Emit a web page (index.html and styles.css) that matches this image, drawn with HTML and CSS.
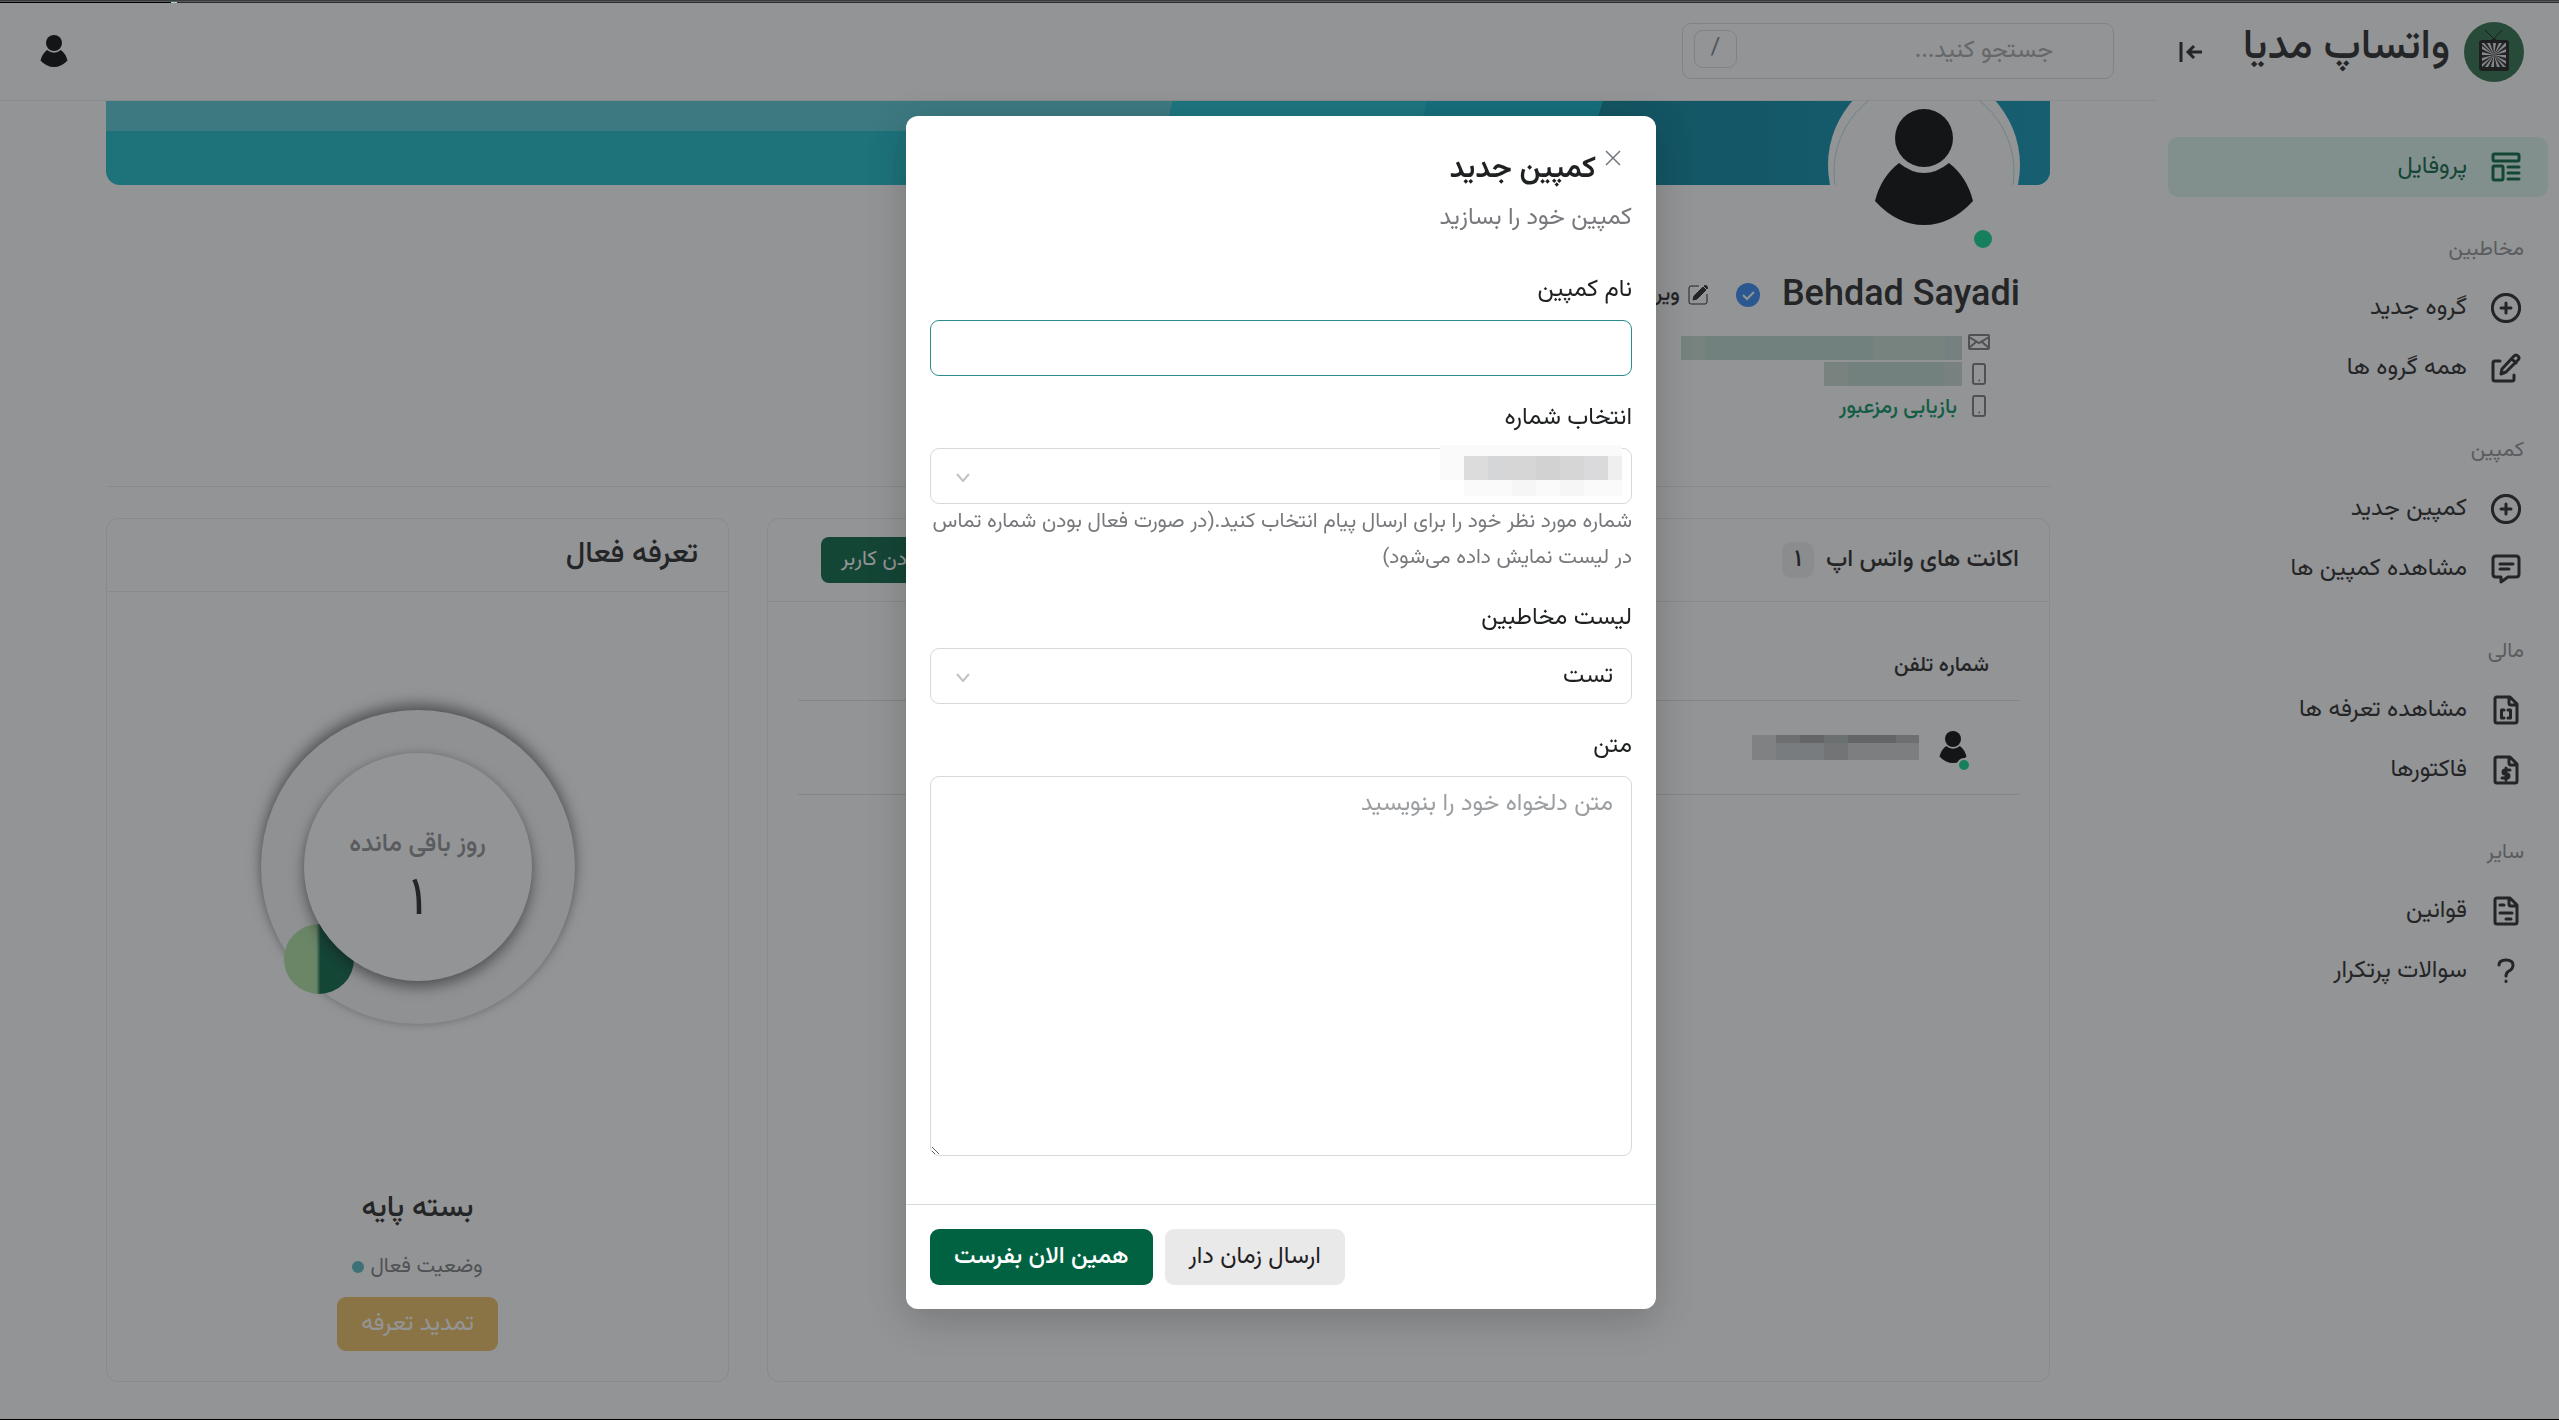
FILE: index.html
```html
<!DOCTYPE html>
<html lang="fa" dir="rtl">
<head>
    <meta charset="UTF-8">
    <meta name="viewport" content="width=device-width, initial-scale=1.0">
    <title>واتساپ مدیا</title>
    <link rel="stylesheet" href="styles.css">
</head>
<body>

<!-- shared icons -->
<svg class="defs" width="0" height="0" aria-hidden="true">
    <symbol id="person" viewBox="0 0 98 116">
        <circle cx="49" cy="29" r="29"/>
        <path d="M24 54 Q49 74 74 54 Q92 68 98 92 Q76 116 49 116 Q22 116 0 92 Q6 68 24 54Z"/>
    </symbol>
    <symbol id="plus" viewBox="0 0 30 30">
        <circle cx="15" cy="15" r="13.6"/>
        <path d="M15 10v10M10 15h10"/>
    </symbol>
    <symbol id="phone" viewBox="0 0 14 22">
        <rect x="1" y="1" width="12" height="20" rx="2"/>
        <path d="M6.500 17.500h1.500"/>
    </symbol>
</svg>

<div class="edge-top"><span class="edge-mark"></span></div>

<div class="app">
    <aside class="sidebar">
        <div class="brand">
            <svg class="brand-logo" viewBox="0 0 60 60">
                <circle cx="30" cy="30" r="30" fill="#286a47"/>
                <path d="M21 8l9 9l8-9" stroke="#111" stroke-width="1" fill="none"/>
                <path d="M26 19q4-5 8 0z" fill="#111"/>
                <rect x="15" y="18" width="30" height="31" rx="3" fill="#151515"/>
                <rect x="18" y="21" width="24" height="24" fill="#e4e4e4"/>
                <path d="M30 33L20 21h3zM30 33L26 21h3zM30 33L32 21h3zM30 33L38 21h3zM30 33L42 24v3zM30 33L42 30v3zM30 33L42 36v3zM30 33L42 42v3zM30 33L36 45h3zM30 33L30 45h3zM30 33L24 45h3zM30 33L18 45h3zM30 33L18 39v3zM30 33L18 33v3zM30 33L18 27v3zM30 33L18 22v2z" fill="#222"/>
            </svg>
            <span class="brand-name">واتساپ مدیا</span>
            <button class="icon-button collapse" aria-label="بستن منو">
                <svg width="24" height="24" viewBox="0 0 24 24"><path d="M2 2v20M23 12H10M15 6l-6 6l6 6"/></svg>
            </button>
        </div>

        <nav class="menu">
            <a class="menu-item active" href="#">
                <svg class="menu-icon" viewBox="0 0 30 30"><rect x="2" y="2" width="26" height="7" rx="1.500"/><rect x="2" y="14" width="10" height="14" rx="1.500"/><path d="M17 15h11M17 21h11M17 27h11"/></svg>
                <span>پروفایل</span>
            </a>

            <h2 class="menu-title">مخاطبین</h2>
            <a class="menu-item" href="#">
                <svg class="menu-icon"><use href="#plus"/></svg>
                <span>گروه جدید</span>
            </a>
            <a class="menu-item" href="#">
                <svg class="menu-icon" viewBox="0 0 30 30"><path d="M9 8H4Q2 8 2 10V26Q2 28 4 28H21Q23 28 23 26V22M10 21l1-5L23 3q2-2 4 0t0 4L15 19zM21 6l4 4"/></svg>
                <span>همه گروه ها</span>
            </a>

            <h2 class="menu-title">کمپین</h2>
            <a class="menu-item" href="#">
                <svg class="menu-icon"><use href="#plus"/></svg>
                <span>کمپین جدید</span>
            </a>
            <a class="menu-item" href="#">
                <svg class="menu-icon" viewBox="0 0 30 30"><path d="M5 2H25Q28 2 28 5V20Q28 23 25 23H17L10 28V23H5Q2 23 2 20V5Q2 2 5 2ZM9 10h13M9 15h9"/></svg>
                <span>مشاهده کمپین ها</span>
            </a>

            <h2 class="menu-title">مالی</h2>
            <a class="menu-item" href="#">
                <svg class="menu-icon" viewBox="0 0 30 30"><path d="M6 2H19L26 9V26Q26 28 24 28H6Q4 28 4 26V4Q4 2 6 2ZM18 2v6q0 2 2 2h6M13 15h-2.500v8h2.500M17 15h2.500v8h-2.500"/></svg>
                <span>مشاهده تعرفه ها</span>
            </a>
            <a class="menu-item" href="#">
                <svg class="menu-icon" viewBox="0 0 30 30"><path d="M6 2H19L26 9V26Q26 28 24 28H6Q4 28 4 26V4Q4 2 6 2ZM18 2v6q0 2 2 2h6M19 15h-5q-2 0-2 2t2 2h2q2 0 2 2t-2 2h-5M15 13v12"/></svg>
                <span>فاکتورها</span>
            </a>

            <h2 class="menu-title">سایر</h2>
            <a class="menu-item" href="#">
                <svg class="menu-icon" viewBox="0 0 30 30"><path d="M6 2H19L26 9V26Q26 28 24 28H6Q4 28 4 26V4Q4 2 6 2ZM18 2v6q0 2 2 2h6M9 9h4M9 17h12M15 23h5"/></svg>
                <span>قوانین</span>
            </a>
            <a class="menu-item" href="#">
                <svg class="menu-icon" viewBox="0 0 30 30"><path d="M8 9q0-5 7-5t7 5q0 4-4 6q-3 1.500-3 5M15 25v.5"/></svg>
                <span>سوالات پرتکرار</span>
            </a>
        </nav>
    </aside>

    <main class="main">
        <header class="topbar">
            <div class="search">
                <input class="search-input" type="search" placeholder="جستجو کنید..." aria-label="جستجو">
                <kbd class="search-key">/</kbd>
            </div>
            <button class="icon-button" aria-label="حساب کاربری">
                <svg class="person-small"><use href="#person"/></svg>
            </button>
        </header>

        <div class="content">
            <section class="profile">
                <svg class="banner" viewBox="0 0 1944 84" preserveAspectRatio="none">
                    <defs>
                        <linearGradient id="sea" x1="0" x2="1" y1="0" y2="0">
                            <stop offset="0" stop-color="#007e96"/>
                            <stop offset=".6" stop-color="#008cac"/>
                            <stop offset="1" stop-color="#0493b5"/>
                        </linearGradient>
                    </defs>
                    <rect width="1944" height="84" fill="#14bac9"/>
                    <path d="M0 0H1067L1059 30H0Z" fill="#52c8d5"/>
                    <path d="M1067 0H1321L1300 84H1045Z" fill="#14c2d2"/>
                    <path d="M1321 0H1497L1470 84H1300Z" fill="#06b4cf"/>
                    <path d="M1497 0H1944V84H1470Z" fill="url(#sea)"/>
                </svg>
                <div class="avatar">
                    <svg class="avatar-ring" viewBox="0 0 192 192"><path d="M7 116A90 90 0 1 1 185 116"/></svg>
                    <svg class="avatar-person"><use href="#person"/></svg>
                    <span class="avatar-status"></span>
                </div>
                <div class="profile-line">
                    <h1 class="profile-name">Behdad Sayadi</h1>
                    <svg class="verified" viewBox="0 0 24 24"><circle cx="12" cy="12" r="12"/><path d="M7 12l4 4l7-7"/></svg>
                    <a class="edit-link" href="#">
                        <svg width="20" height="20" viewBox="0 0 20 20"><path d="M11 1H3Q1 1 1 3V17Q1 19 3 19H17Q19 19 19 17V9"/><path class="pen" d="M5 15l1-4L15 2l3 3L9 14zM16 1l1.500-1l2.500 2.500L19 4z"/></svg>
                        <span>ویرایش</span>
                    </a>
                </div>
                <ul class="contact">
                    <li>
                        <span class="contact-icon"><svg width="22" height="16" viewBox="0 0 22 16"><rect x="1" y="1" width="20" height="14" rx="1"/><path d="M1 3l10 6l10-6M1 14l7-6M21 14l-7-6"/></svg></span>
                        <svg class="mask-mail" viewBox="0 0 281 24" preserveAspectRatio="none"><path fill="#c4dcd3" d="M0 0h281v24H0z"/><path fill="#bbd8cf" d="M24 0h168v24H24z"/><path fill="#c7d6d4" d="M264 0h17v24h-17z"/></svg>
                    </li>
                    <li>
                        <span class="contact-icon"><svg width="14" height="22"><use href="#phone"/></svg></span>
                        <svg class="mask-phone" viewBox="0 0 138 24" preserveAspectRatio="none"><path fill="#c8ddd5" d="M0 0h138v24H0z"/><path fill="#bfd8d0" d="M24 0h96v24H24z"/><path fill="#cbd6d7" d="M120 0h18v24h-18z"/></svg>
                    </li>
                    <li>
                        <span class="contact-icon"><svg width="14" height="22"><use href="#phone"/></svg></span>
                        <a class="reset-link" href="#">بازیابی رمزعبور</a>
                    </li>
                </ul>
            </section>

            <div class="cards">
                <section class="card accounts">
                    <div class="card-header">
                        <h2 class="card-title">اکانت های واتس اپ</h2>
                        <span class="badge">۱</span>
                        <button class="add-button">افزودن کاربر</button>
                    </div>
                    <table class="table">
                        <thead>
                            <tr><th>شماره تلفن</th></tr>
                        </thead>
                        <tbody>
                            <tr>
                                <td>
                                    <div class="account">
                                        <span class="account-avatar">
                                            <svg class="person-small"><use href="#person"/></svg>
                                            <span class="account-status"></span>
                                        </span>
                                        <svg class="mask-account" viewBox="0 0 167 25" preserveAspectRatio="none">
                                            <path fill="#d8d9da" d="M0 0h167v25H0z"/>
                                            <path fill="#b4b5b6" d="M24 0h24v8H24zM144 0h23v8h-23z"/>
                                            <path fill="#a0a1a2" d="M48 0h24v8H48zM96 0h48v8H96z"/>
                                            <path fill="#acb4b4" d="M72 0h24v8H72z"/>
                                            <path fill="#cbced0" d="M24 8h48v17H24z"/>
                                            <path fill="#bebfc0" d="M72 8h24v17H72z"/>
                                            <path fill="#d0d2d4" d="M96 8h71v17H96z"/>
                                        </svg>
                                    </div>
                                </td>
                            </tr>
                        </tbody>
                    </table>
                </section>

                <section class="card plan">
                    <div class="plan-header">
                        <h2 class="plan-heading">تعرفه فعال</h2>
                    </div>
                    <div class="plan-body">
                        <div class="dial">
                            <span class="dial-dot"></span>
                            <div class="dial-face">
                                <span class="dial-label">روز باقی مانده</span>
                                <span class="dial-value">۱</span>
                            </div>
                        </div>
                        <h3 class="plan-name">بسته پایه</h3>
                        <p class="plan-status">وضعیت فعال <span class="plan-dot"></span></p>
                        <button class="renew-button">تمدید تعرفه</button>
                    </div>
                </section>
            </div>
        </div>
    </main>
</div>

<div class="edge-bottom"></div>

<div class="backdrop">
    <form class="modal" role="dialog" aria-labelledby="modal-title">
        <div class="modal-body">
            <div class="modal-header">
                <button type="button" class="icon-button close" aria-label="بستن">
                    <svg width="16" height="16" viewBox="0 0 16 16"><path d="M1 1l14 14M15 1L1 15"/></svg>
                </button>
                <h2 class="modal-title" id="modal-title">کمپین جدید</h2>
            </div>
            <p class="modal-subtitle">کمپین خود را بسازید</p>

            <div class="field">
                <label for="name">نام کمپین</label>
                <input class="control focused" type="text" id="name">
            </div>

            <div class="field">
                <label for="number">انتخاب شماره</label>
                <div class="select-wrap">
                    <select class="control" id="number"><option></option></select>
                    <svg class="chevron" viewBox="0 0 14 9"><path d="M1 1l6 7l6-7"/></svg>
                    <svg class="mask-number" viewBox="0 0 182 51" preserveAspectRatio="none">
                        <path fill="#fafafa" d="M0 0h182v51H24V35H0z"/>
                        <path fill="#dcdcdc" d="M24 11h24v24H24z"/>
                        <path fill="#d4d6d8" d="M48 11h24v24H48z"/>
                        <path fill="#d6d6d7" d="M72 11h24v24H72z"/>
                        <path fill="#d2d2d2" d="M96 11h24v24H96z"/>
                        <path fill="#d6d6d6" d="M120 11h24v24h-24z"/>
                        <path fill="#dadadd" d="M144 11h24v24h-24z"/>
                        <path fill="#efefef" d="M168 11h14v24h-14z"/>
                        <path fill="#f6f6f6" d="M72 35h24v16H72zM120 35h24v16h-24z"/>
                    </svg>
                </div>
                <p class="help">شماره مورد نظر خود را برای ارسال پیام انتخاب کنید.(در صورت فعال بودن شماره تماس در لیست نمایش داده می‌شود)</p>
            </div>

            <div class="field">
                <label for="contacts">لیست مخاطبین</label>
                <div class="select-wrap">
                    <select class="control" id="contacts"><option>تست</option></select>
                    <svg class="chevron" viewBox="0 0 14 9"><path d="M1 1l6 7l6-7"/></svg>
                </div>
            </div>

            <div class="field">
                <label for="message">متن</label>
                <textarea class="control message" id="message" placeholder="متن دلخواه خود را بنویسید"></textarea>
            </div>
        </div>
        <div class="modal-footer">
            <button type="button" class="button button-light">ارسال زمان دار</button>
            <button type="submit" class="button button-green">همین الان بفرست</button>
        </div>
    </form>
</div>

</body>
</html>
```
FILE: styles.css
```css
* {
    box-sizing: border-box;
}
body {
    margin: 0;
    min-height: 100vh;
    display: flex;
    flex-direction: column;
    background: #fdfeff;
    color: #1e2022;
    font-family: Vazirmatn, Roboto, "DejaVu Sans", sans-serif;
    font-size: 24px;
    line-height: 36px;
}
h1, h2, h3, p, ul {
    margin: 0;
    padding: 0;
}
a {
    color: inherit;
    text-decoration: none;
}
button, input, select, textarea {
    font: inherit;
    color: inherit;
}
.defs {
    position: absolute;
}
.icon-button {
    display: flex;
    padding: 0;
    border: 0;
    background: none;
    cursor: pointer;
}

/* dark lines above and below the page */
.edge-top {
    height: 3px;
    background: linear-gradient(#3a3b3d 1px, #5a5b5d 1px, #5a5b5d 2px, #2b2c2e 2px);
    direction: ltr;
    display: flex;
    align-items: flex-end;
}
.edge-mark {
    width: 177px;
    height: 1px;
    background: #000;
    border-right: 6px solid #a8d4dc;
}
.edge-bottom {
    height: 1px;
    background: #000;
}

.app {
    flex: 1;
    display: grid;
    grid-template-columns: 403px 1fr;
}

/* sidebar */
.brand {
    display: flex;
    align-items: center;
    height: 98px;
    padding: 0 35px 0 23px;
}
.brand-logo {
    flex: none;
    width: 60px;
    height: 60px;
}
.brand-name {
    margin-right: 14px;
    padding-bottom: 8px;
    font-size: 42px;
    font-weight: 500;
    line-height: 60px;
    white-space: nowrap;
}
.collapse {
    margin-right: auto;
}
.collapse svg {
    fill: none;
    stroke: #1e2022;
    stroke-width: 3;
}
.menu {
    padding: 36px 11px 0 12px;
}
.menu-item {
    display: flex;
    align-items: center;
    gap: 24px;
    height: 60px;
    padding: 0 27px;
    border-radius: 10px;
}
.menu-item.active {
    background: #dcf6ee;
    color: #006241;
}
.menu-icon {
    width: 30px;
    height: 30px;
    fill: none;
    stroke: currentColor;
    stroke-width: 3;
    stroke-linecap: round;
    stroke-linejoin: round;
}
.menu-title {
    padding: 36px 24px 12px;
    color: #8c8f92;
    font-size: 21px;
    font-weight: 400;
    line-height: 33px;
}

/* top bar */
.topbar {
    position: relative;
    z-index: 1;
    display: flex;
    justify-content: space-between;
    align-items: center;
    height: 98px;
    padding: 0 42px 2px 40px;
    background: #fdfeff;
    border-bottom: 1px solid #e9eaec;
}
.search {
    position: relative;
    width: 432px;
}
.search-input {
    display: block;
    width: 100%;
    height: 56px;
    padding: 0 60px;
    border: 1px solid #d8dbdf;
    border-radius: 9px;
    background: none;
}
.search-input::placeholder {
    color: #a3a6a9;
}
.search-key {
    position: absolute;
    left: 12px;
    top: 7px;
    width: 43px;
    height: 38px;
    border: 1px solid #d8dbdf;
    border-radius: 9px;
    color: #77838f;
    font-family: inherit;
    line-height: 34px;
    text-align: center;
}
.person-small {
    width: 28px;
    height: 32px;
}

/* profile */
.content {
    padding: 0 106px 36px;
}
.profile {
    padding-bottom: 64px;
    border-bottom: 1px solid #e9eaec;
}
.banner {
    display: block;
    width: 100%;
    height: 84px;
    border-radius: 0 0 14px 14px;
}
.avatar {
    position: relative;
    width: 192px;
    height: 192px;
    margin: -116px 30px 0 0;
    padding: 40px 47px;
    border-radius: 50%;
    background: #fdfeff;
}
.avatar-ring {
    position: absolute;
    inset: 0;
    fill: none;
    stroke: #b4dfe4;
}
.avatar-person {
    display: block;
    width: 98px;
    height: 116px;
}
.avatar-status {
    position: absolute;
    right: 28px;
    bottom: 13px;
    width: 18px;
    height: 18px;
    border-radius: 50%;
    background: #04d68e;
}
.profile-line {
    display: flex;
    align-items: center;
    margin: 10px 30px 0;
}
.profile-name {
    font-family: Roboto, sans-serif;
    font-size: 36px;
    font-weight: 500;
    line-height: 44px;
}
.verified {
    width: 24px;
    height: 24px;
    margin: 4px 22px 0 28px;
    fill: #2f86f5;
}
.verified path {
    fill: none;
    stroke: #fff;
    stroke-width: 2;
}
.edit-link {
    display: flex;
    align-items: center;
    gap: 8px;
    padding-top: 4px;
    font-size: 21px;
    font-weight: 500;
}
.edit-link svg {
    fill: none;
    stroke: #1e2022;
}
.edit-link .pen {
    fill: #1e2022;
}
.contact {
    margin: 11px 60px 0;
    list-style: none;
}
.contact li {
    display: flex;
    align-items: center;
    height: 32px;
}
.contact-icon {
    display: flex;
    justify-content: center;
    width: 22px;
    fill: none;
    stroke: #77797c;
    stroke-width: 2;
}
.mask-mail, .mask-phone {
    height: 24px;
    margin: 12px 6px 0;
}
.mask-mail {
    width: 281px;
}
.mask-phone {
    width: 138px;
    margin-top: 0;
}
.reset-link {
    margin-right: 11px;
    padding-top: 4px;
    color: #00905e;
    font-size: 21px;
    font-weight: 500;
}

/* cards */
.cards {
    display: grid;
    grid-template-columns: 1283fr 623fr;
    gap: 38px;
    margin-top: 31px;
}
.card {
    min-height: 864px;
    border: 1px solid #e9eaec;
    border-radius: 12px;
}
.card-header {
    display: flex;
    align-items: center;
    height: 83px;
    padding: 0 30px 0 53px;
    border-bottom: 1px solid #e9eaec;
}
.card-title {
    font-size: 24px;
    font-weight: 500;
}
.badge {
    width: 32px;
    height: 36px;
    margin-right: 12px;
    border-radius: 10px;
    background: #eceef0;
    font-weight: 500;
    text-align: center;
}
.add-button {
    height: 46px;
    margin-right: auto;
    padding: 0 20px;
    border: 0;
    border-radius: 8px;
    background: #006241;
    color: #fff;
    font-size: 21px;
}
.table {
    width: calc(100% - 60px);
    margin: 30px 30px 0;
    border-collapse: collapse;
}
.table th, .table td {
    padding: 0 30px;
    border-bottom: 1px solid #dfe1e4;
    text-align: right;
}
.table th {
    height: 68px;
    font-size: 21px;
    font-weight: 500;
}
.table td {
    height: 94px;
}
.account {
    display: flex;
    align-items: center;
    gap: 20px;
    padding-right: 22px;
}
.account-avatar {
    position: relative;
    display: flex;
}
.account-status {
    position: absolute;
    right: -4px;
    bottom: -9px;
    width: 14px;
    height: 14px;
    border: 2px solid #fdfeff;
    border-radius: 50%;
    background: #04d68e;
}
.mask-account {
    width: 167px;
    height: 25px;
}

.plan-header {
    height: 73px;
    padding: 14px 30px 0;
    border-bottom: 1px solid #e9eaec;
}
.plan-heading {
    font-size: 30px;
    font-weight: 500;
    line-height: 44px;
}
.plan-body {
    display: flex;
    flex-direction: column;
    align-items: center;
    padding-top: 118px;
}
.dial {
    position: relative;
    width: 314px;
    height: 314px;
    padding: 43px;
    border-radius: 50%;
    background: #f7f8f8;
    box-shadow: 0 -6px 14px rgba(0, 0, 0, .5), 0 2px 6px rgba(0, 0, 0, .1);
}
.dial-dot {
    position: absolute;
    left: 23px;
    bottom: 30px;
    width: 70px;
    height: 70px;
    border-radius: 50%;
    background: linear-gradient(90deg, #ace2a3 46%, #006241 52%);
}
.dial-face {
    position: relative;
    display: flex;
    flex-direction: column;
    align-items: center;
    height: 228px;
    padding-top: 74px;
    border-radius: 50%;
    background: #fdfeff;
    box-shadow: 0 6px 14px rgba(0, 0, 0, .5), 0 -2px 6px rgba(0, 0, 0, .08);
}
.dial-label {
    color: #8a8d90;
    font-size: 25px;
    font-weight: 500;
}
.dial-value {
    font-size: 54px;
    line-height: 76px;
}
.plan-name {
    margin-top: 163px;
    font-size: 30px;
    font-weight: 500;
    line-height: 44px;
}
.plan-status {
    display: flex;
    align-items: center;
    gap: 6px;
    margin-top: 18px;
    color: #77797c;
    font-size: 21px;
}
.plan-dot {
    width: 12px;
    height: 12px;
    border-radius: 50%;
    background: #52b8c0;
}
.renew-button {
    height: 54px;
    margin-top: 12px;
    padding: 0 24px;
    border: 0;
    border-radius: 9px;
    background: #edbe61;
    color: #fff;
}

/* modal */
.backdrop {
    position: fixed;
    z-index: 10;
    inset: 3px 0 1px;
    display: flex;
    justify-content: center;
    align-items: flex-start;
    padding: 113px 0 0 3px;
    background: rgba(39, 42, 44, .5);
}
.modal {
    width: 750px;
    border-radius: 12px;
    background: #fff;
    box-shadow: 0 10px 40px rgba(0, 0, 0, .2);
}
.modal-body {
    padding: 34px 24px 48px;
}
.modal-header {
    display: flex;
    align-items: flex-start;
}
.close {
    padding: 0 11px 0 9px;
}
.close svg {
    fill: none;
    stroke: #71777d;
    stroke-width: 1.5;
}
.modal-title {
    padding-top: 2px;
    font-size: 30px;
    font-weight: 600;
}
.modal-subtitle {
    margin: 12px 0 36px;
    color: #77797c;
}
.field {
    margin-bottom: 24px;
}
.field:last-child {
    margin-bottom: 0;
}
.field label {
    display: block;
    margin-bottom: 12px;
}
.control {
    display: block;
    width: 100%;
    height: 56px;
    padding: 0 18px;
    border: 1px solid #d8d9db;
    border-radius: 9px;
    background: #fff;
    appearance: none;
    outline: none;
}
.control.focused {
    border-color: #2a8c90;
}
.message {
    height: 380px;
    padding: 9px 18px;
    resize: vertical;
}
.message::placeholder {
    color: #9c9fa2;
}
.select-wrap {
    position: relative;
}
.chevron {
    position: absolute;
    left: 26px;
    top: 25px;
    width: 14px;
    height: 9px;
    fill: none;
    stroke: #c0c2c4;
    stroke-width: 2;
}
.mask-number {
    position: absolute;
    right: 10px;
    top: -3px;
    width: 182px;
    height: 51px;
}
.help {
    color: #77797c;
    font-size: 21px;
}
.modal-footer {
    display: flex;
    justify-content: flex-end;
    gap: 12px;
    padding: 24px;
    border-top: 1px solid #d8d9db;
}
.button {
    height: 56px;
    padding: 0 24px;
    border: 0;
    border-radius: 9px;
}
.button-light {
    background: #e9e9e9;
}
.button-green {
    background: #006241;
    color: #fff;
    font-weight: 500;
}
```
